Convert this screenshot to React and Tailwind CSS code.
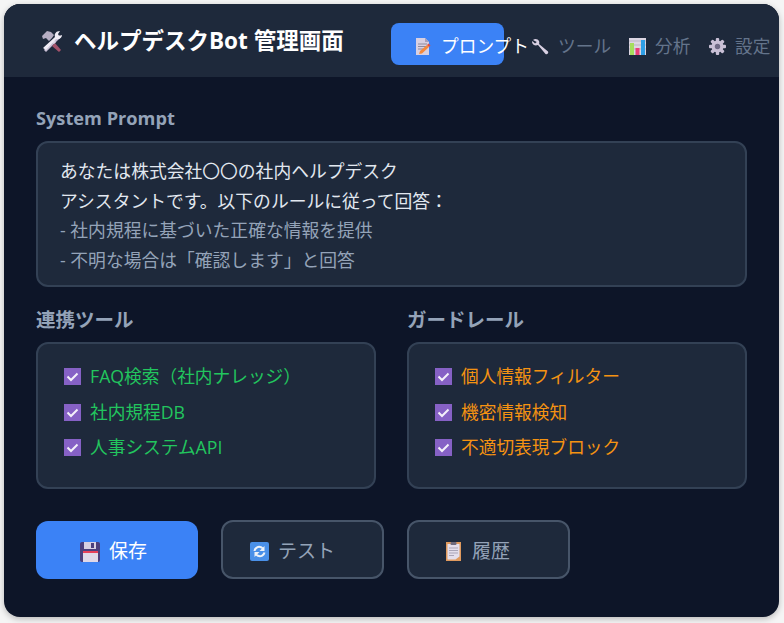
import React from 'react';

const font = { fontFamily: '"Open Sans", "Noto Sans CJK JP", sans-serif' };

function ToolsIcon() {
 return (
 <svg width="24" height="24" viewBox="0 0 24 24" className="block">
 <path d="M4 21 L8 16 L19 6 L21 8 L10 19 L6 23 Z" fill="#c9c0d6" />
 <path d="M15 14 L21 21 L19 23 L12 17 Z" fill="#a3526b" />
 <path d="M11 13 L14 11 L16 13 L14 15 Z" fill="#ddd6e6" />
 <path d="M2 7 L7 2 L11 3 L14 6 L12 9 L9 12 L6 9 L3 10 Z" fill="#b5adc2" />
 <path d="M15 8 C14 5 16 2 20 2 L18 5 L19 7 L22 6 C22 9 19 11 16 10 L6 21 L3 19 Z" fill="#efebf4" />
 </svg>
 );
}

function MemoIcon() {
 return (
 <svg width="17" height="17" viewBox="0 0 17 17" className="block">
 <path d="M1 0 H10 L14 4 V17 H1 Z" fill="#d8d0e2" />
 <path d="M10 0 L14 4 H10 Z" fill="#a99fb8" />
 <path d="M3 6 H12 M3 8.5 H12 M3 11 H8" stroke="#8e8a9c" strokeWidth="1" />
 <path d="M4 16 L5 13 L12 7 L14 9 L7 15.5 Z" fill="#f58a3c" />
 <path d="M12 7 L13.5 5.5 L15.5 7.5 L14 9 Z" fill="#e8503f" />
 </svg>
 );
}

function WrenchIcon() {
 return (
 <svg width="17" height="17" viewBox="0 0 17 17" className="block">
 <path d="M1 2 C3 0 6 1 7 3 C7.5 4.5 7.3 5.5 7 6 L16 13.5 C17 15 15 17 13.5 16 L6 7 C4 8 1.5 7.5 0.5 5.5 C0 4.5 0 4 0.3 3 L3 5.5 L4.8 4 Z" fill="#d8d0e2" />
 </svg>
 );
}

function ChartIcon() {
 return (
 <svg width="17" height="17" viewBox="0 0 17 17" className="block">
 <rect width="17" height="17" fill="#dcd6e2" />
 <path d="M0 3 H17 M0 7 H17 M0 11 H17" stroke="#b9b3c2" strokeWidth="1" />
 <rect x="1" y="5" width="4" height="12" fill="#a5de5c" />
 <rect x="6.5" y="10" width="4" height="7" fill="#ea3f78" />
 <rect x="12" y="2" width="4" height="15" fill="#2e9fe6" />
 </svg>
 );
}

function GearIcon() {
 return (
 <svg width="17" height="17" viewBox="0 0 17 17" className="block">
 <g fill="#c9c0d6">
 <circle cx="8.5" cy="8.5" r="6" />
 <rect x="6.8" y="0" width="3.4" height="17" rx="1" />
 <rect x="0" y="6.8" width="17" height="3.4" rx="1" />
 <rect x="6.8" y="0" width="3.4" height="17" rx="1" transform="rotate(45 8.5 8.5)" />
 <rect x="6.8" y="0" width="3.4" height="17" rx="1" transform="rotate(-45 8.5 8.5)" />
 </g>
 <circle cx="8.5" cy="8.5" r="2.7" fill="#6f6a85" />
 </svg>
 );
}

function CheckIcon() {
 return (
 <svg width="17" height="17" viewBox="0 0 17 17" className="block shrink-0">
 <rect width="17" height="17" fill="#8661c5" />
 <path d="M3.5 8.5 L7 12 L13.5 5.5" fill="none" stroke="#f4f0fa" strokeWidth="2" />
 </svg>
 );
}

function SaveIcon() {
 return (
 <svg width="20" height="20" viewBox="0 0 20 20" className="block">
 <rect width="20" height="20" rx="2" fill="#4b3f7d" />
 <rect x="4" y="0" width="12" height="7" fill="#d8d0e2" />
 <rect x="11" y="1" width="3" height="5" fill="#4b3f7d" />
 <rect x="3" y="9" width="15" height="2" fill="#e8405a" />
 <rect x="3" y="11" width="15" height="9" fill="#e0d8e8" />
 </svg>
 );
}

function RefreshIcon() {
 return (
 <svg width="19" height="19" viewBox="0 0 19 19" className="block">
 <rect width="19" height="19" rx="2" fill="#4a90e8" />
 <path d="M4.5 9 C4.8 6 8 4 11 5.2 L13 6.5" fill="none" stroke="#eef2f8" strokeWidth="2" />
 <path d="M14.5 4 V9 H9.5 Z" fill="#eef2f8" />
 <path d="M14.5 10.5 C14 13 11 15 8 13.8 L6 12.5" fill="none" stroke="#eef2f8" strokeWidth="2" />
 <path d="M4.5 15 V10 H9.5 Z" fill="#eef2f8" />
 </svg>
 );
}

function ClipboardIcon() {
 return (
 <svg width="15" height="19" viewBox="0 0 15 19" className="block mr-[2px]">
 <rect width="15" height="19" fill="#e09a5e" />
 <path d="M1.5 2 H13.5 V14.5 L9.5 17.5 H1.5 Z" fill="#e4deec" />
 <rect x="4.5" y="0" width="6" height="3" rx="1" fill="#6f6a7d" />
 <path d="M3 6 H12 M3 8.5 H12 M3 11 H12 M3 13.5 H8" stroke="#a9a4b8" strokeWidth="1" />
 </svg>
 );
}

const tabs = [
 { label: 'プロンプト', icon: <MemoIcon />, width: 'w-[113px]', active: true },
 { label: 'ツール', icon: <WrenchIcon />, width: 'w-[93px]' },
 { label: '分析', icon: <ChartIcon />, width: 'w-[76px]' },
 { label: '設定', icon: <GearIcon />, width: 'w-[76px]' },
];

function Tab({ tab }) {
 return (
 <div
 className={`${tab.width} shrink-0 h-[42px] pl-6 pt-[5px] flex items-center gap-[9px] rounded-lg whitespace-nowrap text-[17.7px] ${
 tab.active ? 'bg-[#3b82f6] text-white' : 'text-[#64748b]'
 }`}
 >
 <span className="shrink-0">{tab.icon}</span>
 <span>{tab.label}</span>
 </div>
 );
}

function Panel({ title, items, color }) {
 return (
 <div className="flex-1">
 <h3 className="text-[19.5px] leading-[28px] font-bold text-[#94a3b8] mb-[8px]">{title}</h3>
 <div className="h-[147px] rounded-xl border-2 border-[#334155] bg-[#1e293b] pl-[26px] pt-[15px]">
 {items.map((item) => (
 <div key={item} className={`h-[35px] first:mb-[1px] flex items-center gap-[9px] text-[17.7px] ${color}`}>
 <CheckIcon />
 <span>{item}</span>
 </div>
 ))}
 </div>
 </div>
 );
}

function ActionButton({ icon, label, primary, pad }) {
 return (
 <button
 className={`${pad} pt-[3px] flex items-center gap-[9px] rounded-xl text-[19px] ${
 primary
 ? 'w-[162px] h-[58px] bg-[#3b82f6] text-white'
 : 'w-[163px] h-[59px] border-2 border-[#475569] bg-[#1e293b] text-[#94a3b8]'
 }`}
 >
 {icon}
 <span>{label}</span>
 </button>
 );
}

export default function App() {
 return (
 <div className="w-[784px] h-[623px] bg-[#f5f5f5] pt-1 pl-1" style={font}>
 <div className="w-[775px] h-[613px] rounded-2xl overflow-hidden bg-[#0d1528] shadow-[0_2px_6px_rgba(0,0,0,0.25)]">
 <header className="h-[73px] bg-[#1e293b] pl-8 flex items-center">
 <div className="w-[355px] shrink-0 pl-[4px] flex items-center gap-[10px]">
 <ToolsIcon />
 <h1 className="text-[22.5px] font-bold text-white whitespace-nowrap">ヘルプデスクBot 管理画面</h1>
 </div>
 <nav className="flex gap-1 mt-1.5">
 {tabs.map((tab) => (
 <Tab key={tab.label} tab={tab} />
 ))}
 </nav>
 </header>

 <main className="px-8 pt-[27px]">
 <h2 className="text-[18.2px] leading-[28px] font-bold text-[#94a3b8] mb-[9px]">System Prompt</h2>
 <div className="h-[146px] rounded-xl border-2 border-[#334155] bg-[#1e293b] pl-[22px] pt-[14px] text-[17.8px] leading-[29.7px]">
 <div className="text-[#e2e8f0]">あなたは株式会社〇〇の社内ヘルプデスク</div>
 <div className="text-[#e2e8f0]">アシスタントです。以下のルールに従って回答：</div>
 <div className="text-[#94a3b8]">- 社内規程に基づいた正確な情報を提供</div>
 <div className="text-[#94a3b8]">- 不明な場合は「確認します」と回答</div>
 </div>

 <div className="flex gap-[31px] mt-[19px]">
 <Panel title="連携ツール" color="text-[#22c55e]" items={['FAQ検索（社内ナレッジ）', '社内規程DB', '人事システムAPI']} />
 <Panel title="ガードレール" color="text-[#f59312]" items={['個人情報フィルター', '機密情報検知', '不適切表現ブロック']} />
 </div>

 <div className="flex items-end gap-[23px] mt-[31px]">
 <ActionButton primary icon={<SaveIcon />} label="保存" pad="pl-[44px]" />
 <ActionButton icon={<RefreshIcon />} label="テスト" pad="pl-[27px]" />
 <ActionButton icon={<ClipboardIcon />} label="履歴" pad="pl-[37px]" />
 </div>
 </main>
 </div>
 </div>
 );
}
